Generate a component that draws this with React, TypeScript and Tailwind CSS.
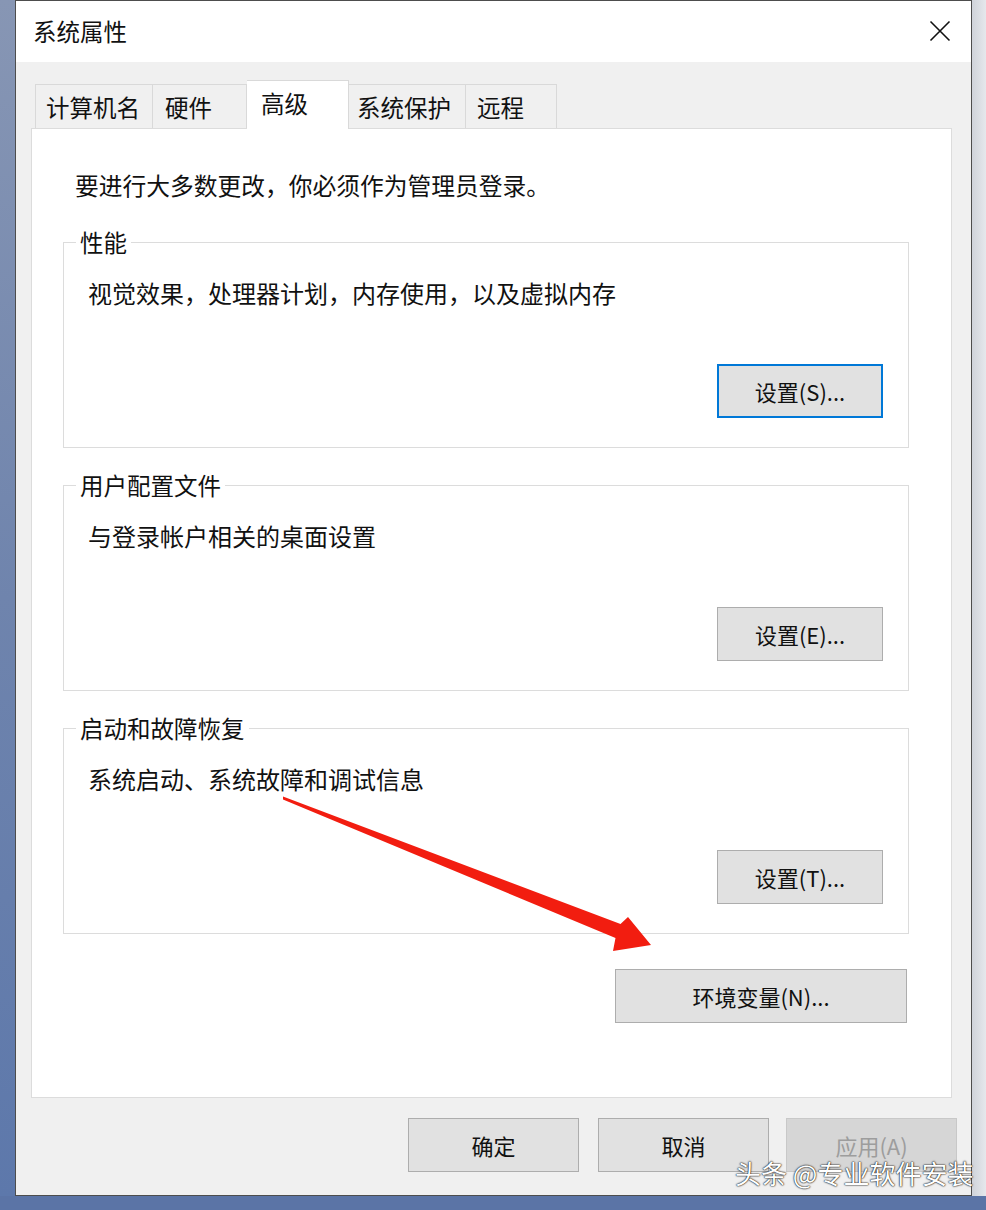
import type { ReactNode } from 'react';

// default Win10 push button
const Btn = ({ children, className = '', focus = false, disabled = false }: { children: ReactNode; className?: string; focus?: boolean; disabled?: boolean }) => (
    <div
        className={`flex items-center justify-center h-[54px] text-[22px] leading-none ${
            focus
                ? 'border-2 border-[#0078d7] bg-[#e1e1e1] text-[#111]'
                : disabled
                ? 'border border-[#c8c8c8] bg-[#d6d6d6] text-[#9d9d9d]'
                : 'border border-[#adadad] bg-[#e1e1e1] text-[#111]'
        } ${className}`}
    >
        {children}
    </div>
);

const Group = ({ title, text, button, focus = false, className = '' }: { title: string; text: string; button: string; focus?: boolean; className?: string }) => (
    <fieldset className={`w-[846px] border border-[#dcdcdc] ${className}`}>
        <legend className="ml-[12px] px-[4px] text-[23.5px] leading-[30px] text-[#111]">{title}</legend>
        <div className="h-[190px] flex flex-col pt-[21px] pb-[29px] pl-[24px] pr-[25px]">
            <div className="text-[24px] leading-[30px] text-[#111]">{text}</div>
            <Btn focus={focus} className="mt-auto self-end w-[166px]">
                {button}
            </Btn>
        </div>
    </fieldset>
);

export default function App() {
    return (
        <div className="relative w-[986px] h-[1210px] overflow-hidden bg-[#5b74a6] font-['Microsoft_YaHei','Noto_Sans_CJK_SC',sans-serif] flex">
            {/* desktop strip on the left */}
            <div className="w-[15px] h-[1196px] bg-[linear-gradient(180deg,#8796b4,#6f84ad_50%,#5d78ab)]" />

            {/* Window */}
            <div className="w-[957px] h-[1196px] border border-[#4d4d4d] flex flex-col bg-[#f0f0f0]">
                {/* Title bar */}
                <div className="h-[61px] bg-white flex items-center justify-between pl-[17px] pr-[20px]">
                    <span className="text-[23.5px] text-[#111] leading-none">系统属性</span>
                    <svg width="22" height="22" viewBox="0 0 22 22" className="mt-[-2px]">
                        <path d="M1.5 1.5 L20.5 20.5 M20.5 1.5 L1.5 20.5" stroke="#111" strokeWidth="1.6" fill="none" />
                    </svg>
                </div>

                {/* Body */}
                <div className="flex-1 flex flex-col pt-[18px] pl-[15px]">
                    {/* Tabs */}
                    <div className="flex items-end ml-[4px] h-[48px] text-[23.5px] text-[#111]">
                        <div className="w-[118px] h-[44px] border border-b-0 border-[#d9d9d9] bg-[#f0f0f0] flex items-center pl-[10px] pt-[2px]">计算机名</div>
                        <div className="w-[94px] h-[44px] border border-b-0 border-l-0 border-[#d9d9d9] bg-[#f0f0f0] flex items-center pl-[12px] pt-[2px]">硬件</div>
                        <div className="relative z-10 -mb-px w-[102px] h-[49px] border border-b-0 border-l-0 border-[#d9d9d9] bg-white flex items-center pl-[14px] pb-[3px]">高级</div>
                        <div className="w-[117px] h-[44px] border border-b-0 border-l-0 border-[#d9d9d9] bg-[#f0f0f0] flex items-center pl-[8px] pt-[2px]">系统保护</div>
                        <div className="w-[91px] h-[44px] border border-b-0 border-l-0 border-[#d9d9d9] bg-[#f0f0f0] flex items-center pl-[11px] pt-[2px]">远程</div>
                    </div>

                    {/* Tab page */}
                    <div className="w-[921px] h-[970px] border border-[#dcdcdc] bg-white flex flex-col pt-[41px] pl-[31px]">
                        <div className="ml-[12px] text-[23.75px] leading-[30px] text-[#111]">要进行大多数更改，你必须作为管理员登录。</div>

                        <Group className="mt-[27px]" title="性能" text="视觉效果，处理器计划，内存使用，以及虚拟内存" button="设置(S)..." focus />
                        <Group className="mt-[22px]" title="用户配置文件" text="与登录帐户相关的桌面设置" button="设置(E)..." />
                        <Group className="mt-[22px]" title="启动和故障恢复" text="系统启动、系统故障和调试信息" button="设置(T)..." />

                        <div className="w-[846px] flex justify-end mt-[35px]">
                            <Btn className="w-[292px] mr-[2px]">环境变量(N)...</Btn>
                        </div>
                    </div>

                    {/* Dialog buttons */}
                    <div className="flex justify-end pr-[14px] mt-[20px]">
                        <Btn className="w-[171px]">确定</Btn>
                        <Btn className="w-[171px] ml-[19px]">取消</Btn>
                        <Btn className="w-[171px] ml-[17px]" disabled>应用(A)</Btn>
                    </div>
                </div>
            </div>

            {/* window shadow strip on the right */}
            <div className="w-[14px] h-[1196px] bg-[linear-gradient(90deg,#cfd3da,#e6e8ec)]" />

            {/* red annotation arrow */}
            <svg className="absolute left-0 top-0 pointer-events-none" width="986" height="1210" viewBox="0 0 986 1210">
                <polygon points="283,796.5 620.5,924 628,917 651,945 613,951 615.5,938 283,799.5" fill="#f21d10" />
            </svg>

            {/* watermark */}
            <div className="absolute left-[735px] top-[1158px] text-[26px] leading-[30px] text-white [text-shadow:0_0_2px_#000,0_0_1px_#000]">
                头条 @专业软件安装
            </div>
        </div>
    );
}
